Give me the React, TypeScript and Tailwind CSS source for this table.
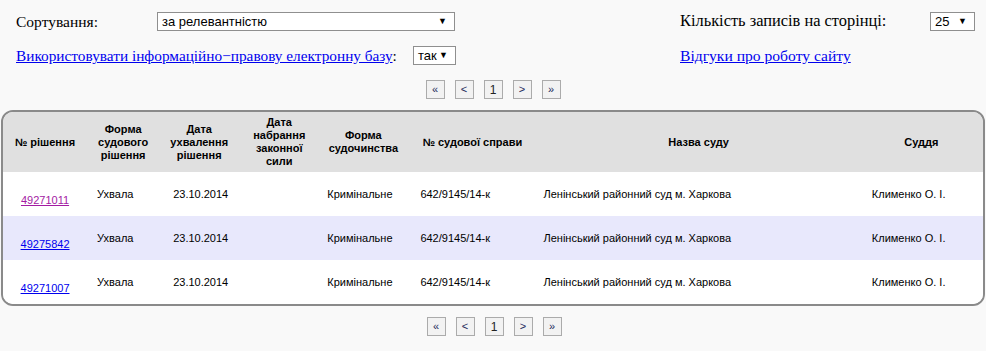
import React from "react";

const serif = { fontFamily: '"Liberation Serif", "Times New Roman", serif' };
const sans = { fontFamily: '"Liberation Sans", Arial, sans-serif' };

type Row = { id: string; visited?: boolean; shaded?: boolean };

const rows: Row[] = [
  { id: "49271011", visited: true },
  { id: "49275842", shaded: true },
  { id: "49271007" },
];

function FakeSelect({ value, width }: { value: string; width: string }) {
  return (
    <div
      className={`${width} h-[19px] flex items-center justify-between border border-[#8f8f8f] bg-white pl-[4px] pr-[7px] text-[13px] text-black`}
      style={sans}
    >
      <span className="leading-none">{value}</span>
      <span className="text-[9px] leading-none">▼</span>
    </div>
  );
}

function Pager() {
  const items = ["«", "<", "1", ">", "»"];
  return (
    <div className="flex justify-center gap-[10px]" style={sans}>
      {items.map((t, i) => (
        <div
          key={i}
          className={`w-[19px] h-[19px] flex items-center justify-center border border-[#ababab] bg-[#f2f2f2] leading-none ${
            t === "1" ? "text-[12px] text-[#222]" : "text-[11px] text-[#1c2a5a]"
          }`}
        >
          {t}
        </div>
      ))}
    </div>
  );
}

const headers = [
  { w: "w-[84px]", label: ["№ рішення"] },
  { w: "w-[72px]", label: ["Форма", "судового", "рішення"] },
  { w: "w-[80px]", label: ["Дата", "ухвалення", "рішення"] },
  { w: "w-[80px]", label: ["Дата", "набрання", "законної", "сили"] },
  { w: "w-[88px]", label: ["Форма", "судочинства"] },
  { w: "w-[130px]", label: ["№ судової справи"] },
  { w: "w-[322px]", label: ["Назва суду"] },
  { w: "w-[123px]", label: ["Суддя"] },
];

export default function App() {
  return (
    <div className="min-h-[351px] w-[986px] bg-[#f9f9f9] text-black">
      {/* filters */}
      <div className="flex pt-[12px] pl-[16px]" style={serif}>
        <div className="w-[664px] flex flex-col gap-[15px]">
          <div className="flex items-center h-[19px]">
            <div className="w-[141px] text-[15.5px] leading-none">Сортування:</div>
            <FakeSelect value="за релевантністю" width="w-[298px]" />
          </div>
          <div className="flex items-center h-[19px]">
            <div className="w-[381px] text-[15.3px] leading-none whitespace-nowrap">
              <a href="#" className="text-[#0000ee] underline">
                Використовувати інформаційно−правову електронну базу
              </a>
              :
            </div>
            <div className="ml-[16px]">
              <FakeSelect value="так" width="w-[43px]" />
            </div>
          </div>
        </div>
        <div className="flex flex-col gap-[15px]">
          <div className="flex items-center h-[19px]">
            <div className="w-[250px] text-[16.4px] leading-none">Кількість записів на сторінці:</div>
            <FakeSelect value="25" width="w-[45px]" />
          </div>
          <div className="flex items-center h-[19px]">
            <a href="#" className="text-[15.6px] leading-none text-[#0000ee] underline">
              Відгуки про роботу сайту
            </a>
          </div>
        </div>
      </div>

      <div className="mt-[15px]">
        <Pager />
      </div>

      {/* results */}
      <div className="mt-[11px] ml-[1px] w-[984px] rounded-[12px] border-2 border-[#8a8a8a] bg-white overflow-hidden" style={sans}>
        <table className="table-fixed border-collapse w-full text-[11px]">
          <thead>
            <tr className="bg-[#e0e0e0] h-[60px]">
              {headers.map((h, i) => (
                <th key={i} className={`${h.w} text-center align-middle font-bold leading-[13px] px-0`}>
                  {h.label.map((l, j) => (
                    <div key={j}>{l}</div>
                  ))}
                </th>
              ))}
            </tr>
          </thead>
          <tbody>
            {rows.map((r) => (
              <tr key={r.id} className={`h-[44px] ${r.shaded ? "bg-[#e8e8fc]" : "bg-white"}`}>
                <td className="text-center align-middle pt-[13px]">
                  <a
                    href="#"
                    className={`underline ${r.visited ? "text-[#a31aa3]" : "text-[#0000ee]"}`}
                  >
                    {r.id}
                  </a>
                </td>
                <td className="align-middle pl-[10px]">Ухвала</td>
                <td className="align-middle pl-[14px]">23.10.2014</td>
                <td className="align-middle"></td>
                <td className="align-middle pl-[8px]">Кримінальне</td>
                <td className="align-middle pl-[13px]">642/9145/14-к</td>
                <td className="align-middle pl-[6px]">Ленінський районний суд м. Харкова</td>
                <td className="align-middle pl-[12px]">Клименко О. І.</td>
              </tr>
            ))}
          </tbody>
        </table>
      </div>

      <div className="mt-[11px] pl-[2px]">
        <Pager />
      </div>
    </div>
  );
}
